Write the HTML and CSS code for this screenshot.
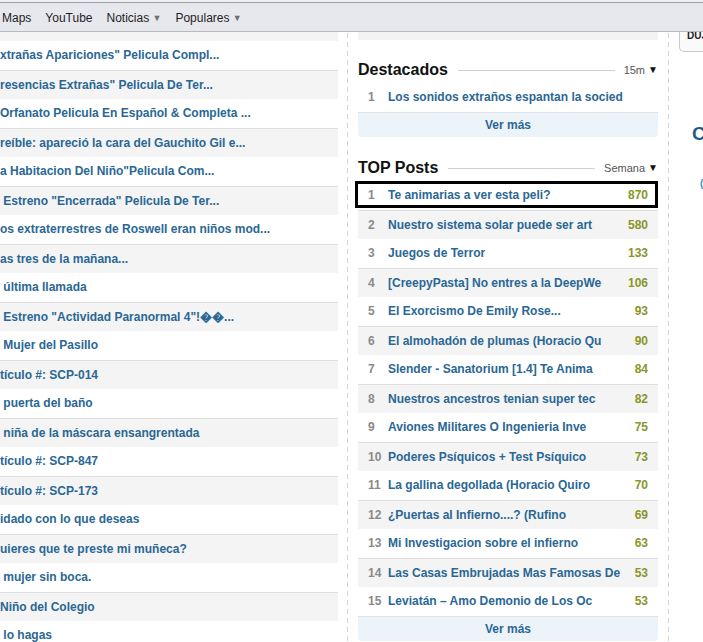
FILE: index.html
```html
<!DOCTYPE html>
<html lang="es">
<head>
<meta charset="utf-8">
<title>Posts</title>
<link rel="stylesheet" href="styles.css">
</head>
<body>
<div class="toolbar">
  <nav class="bookmarks">
    <span class="bm">Maps</span>
    <span class="bm">YouTube</span>
    <span class="bm">Noticias <span class="caret">&#9660;</span></span>
    <span class="bm">Populares <span class="caret">&#9660;</span></span>
  </nav>
</div>

<div class="page">
  <section class="col-left">
    <ul class="last-posts">
      <li class="stub"></li>
      <li><a>xtrañas Apariciones" Pelicula Compl...</a></li>
      <li><a>resencias Extrañas" Pelicula De Ter...</a></li>
      <li><a>Orfanato Pelicula En Español &amp; Completa ...</a></li>
      <li><a>reíble: apareció la cara del Gauchito Gil e...</a></li>
      <li><a>a Habitacion Del Niño"Pelicula Com...</a></li>
      <li><a>&nbsp;Estreno "Encerrada" Pelicula De Ter...</a></li>
      <li><a>os extraterrestres de Roswell eran niños mod...</a></li>
      <li><a>as tres de la mañana...</a></li>
      <li><a>&nbsp;última llamada</a></li>
      <li><a>&nbsp;Estreno "Actividad Paranormal 4"!&#xFFFD;&#xFFFD;...</a></li>
      <li><a>&nbsp;Mujer del Pasillo</a></li>
      <li><a>tículo #: SCP-014</a></li>
      <li><a>&nbsp;puerta del baño</a></li>
      <li><a>&nbsp;niña de la máscara ensangrentada</a></li>
      <li><a>tículo #: SCP-847</a></li>
      <li><a>tículo #: SCP-173</a></li>
      <li><a>idado con lo que deseas</a></li>
      <li><a>uieres que te preste mi muñeca?</a></li>
      <li><a>&nbsp;mujer sin boca.</a></li>
      <li><a>Niño del Colegio</a></li>
      <li><a>&nbsp;lo hagas</a></li>
    </ul>
  </section>

  <section class="col-mid">
    <div class="band"></div>

    <div class="box-head">
      <h2>Destacados</h2>
      <span class="rule"></span>
      <span class="period">15m <span class="caret">&#9660;</span></span>
    </div>
    <ol class="ranking">
      <li><span class="num">1</span><a class="title">Los sonidos extraños espantan la socied</a></li>
    </ol>
    <a class="more">Ver más</a>

    <div class="box-head second">
      <h2>TOP Posts</h2>
      <span class="rule"></span>
      <span class="period">Semana <span class="caret">&#9660;</span></span>
    </div>
    <ol class="ranking">
      <li class="marked"><span class="num">1</span><a class="title">Te animarias a ver esta peli?</a><span class="pts">870</span></li>
      <li><span class="num">2</span><a class="title">Nuestro sistema solar puede ser art</a><span class="pts">580</span></li>
      <li><span class="num">3</span><a class="title">Juegos de Terror</a><span class="pts">133</span></li>
      <li><span class="num">4</span><a class="title">[CreepyPasta] No entres a la DeepWe</a><span class="pts">106</span></li>
      <li><span class="num">5</span><a class="title">El Exorcismo De Emily Rose...</a><span class="pts">93</span></li>
      <li><span class="num">6</span><a class="title">El almohadón de plumas (Horacio Qu</a><span class="pts">90</span></li>
      <li><span class="num">7</span><a class="title">Slender - Sanatorium [1.4] Te Anima</a><span class="pts">84</span></li>
      <li><span class="num">8</span><a class="title">Nuestros ancestros tenian super tec</a><span class="pts">82</span></li>
      <li><span class="num">9</span><a class="title">Aviones Militares O Ingenieria Inve</a><span class="pts">75</span></li>
      <li><span class="num">10</span><a class="title">Poderes Psíquicos + Test Psíquico</a><span class="pts">73</span></li>
      <li><span class="num">11</span><a class="title">La gallina degollada (Horacio Quiro</a><span class="pts">70</span></li>
      <li><span class="num">12</span><a class="title">¿Puertas al Infierno....? (Rufino</a><span class="pts">69</span></li>
      <li><span class="num">13</span><a class="title">Mi Investigacion sobre el infierno</a><span class="pts">63</span></li>
      <li><span class="num">14</span><a class="title">Las Casas Embrujadas Mas Famosas De</a><span class="pts">53</span></li>
      <li><span class="num">15</span><a class="title">Leviatán – Amo Demonio de Los Oc</a><span class="pts">53</span></li>
    </ol>
    <a class="more">Ver más</a>
  </section>

  <aside class="col-right">
    <div class="tab">DUJ</div>
    <h3 class="side-title">C</h3>
    <a class="side-link">(</a>
  </aside>
</div>
</body>
</html>
```

FILE: styles.css
```css
html, body {
  margin: 0;
  padding: 0;
  overflow: hidden;
}

body {
  width: 703px;
  height: 642px;
  background: #fff;
  font-family: "Liberation Sans", Arial, sans-serif;
  color: #222;
}

a {
  color: #2a6795;
  text-decoration: none;
}

/* bookmarks bar */
.toolbar {
  padding-top: 2px;
  background: #eeeff2;
}

.bookmarks {
  height: 27px;
  padding: 1px 0 0 2px;
  border-top: 1px solid #9d9fa4;
  border-bottom: 1px solid #b7b9be;
  background: #e7e8ed;
  display: flex;
  align-items: center;
  gap: 14px;
  font-size: 12px;
  color: #1e1e1e;
}

.bookmarks .caret {
  font-size: 9px;
  color: #6f6f6f;
  vertical-align: 1px;
}

/* three-column page */
.page {
  display: flex;
  height: 610px;
  overflow: hidden;
}

.col-left {
  width: 338px;
  flex: none;
  overflow: hidden;
}

.last-posts {
  list-style: none;
  margin: 0;
  padding: 0;
}

.last-posts li {
  height: 29px;
  line-height: 29px;
  box-sizing: border-box;
  white-space: nowrap;
  overflow: hidden;
  font-size: 12px;
  font-weight: bold;
}

.last-posts li:nth-child(odd) {
  background: #f4f4f4;
  border-top: 1px solid #dedede;
  line-height: 28px;
}

.last-posts li.stub {
  height: 9px;
  border-top: 0;
}

.col-mid {
  width: 322px;
  flex: none;
  margin-left: 9px;
  padding: 0 11px;
  box-sizing: border-box;
  background:
    linear-gradient(#d3d3d3 5px, transparent 5px) 0 1px / 1px 9px repeat-y,
    linear-gradient(#d3d3d3 5px, transparent 5px) 100% 1px / 1px 9px repeat-y;
}

.band {
  height: 8px;
  background: #f3f3f3;
}

.box-head {
  display: flex;
  align-items: center;
  height: 26px;
  margin-top: 17px;
}

.box-head.second {
  margin-top: 18px;
}

.box-head h2 {
  margin: 0;
  font-size: 16px;
  font-weight: bold;
  color: #111;
}

.rule {
  flex: 1;
  height: 1px;
  background: #d0d0d0;
  margin: 0 9px 0 10px;
}

.period {
  font-size: 11px;
  color: #555;
}

.period .caret {
  font-size: 10px;
  color: #111;
  vertical-align: 1px;
}

.ranking {
  list-style: none;
  margin: 0;
  padding: 0;
}

.ranking li {
  display: flex;
  height: 29px;
  line-height: 29px;
  box-sizing: border-box;
  padding: 0 10px;
  font-size: 12px;
  font-weight: bold;
  white-space: nowrap;
}

.ranking li:nth-child(even) {
  background: #f4f4f4;
  border-top: 1px solid #dedede;
  line-height: 28px;
}

.num {
  width: 20px;
  flex: none;
  color: #8a8a8a;
}

.title {
  flex: 1;
  overflow: hidden;
}

.pts {
  color: #88962a;
  text-align: right;
}

.ranking li.marked {
  position: relative;
}

.ranking li.marked::after {
  content: "";
  position: absolute;
  left: -3px;
  right: 0;
  top: 0;
  height: 27px;
  border: 3px solid #000;
  box-sizing: border-box;
}

.more {
  display: block;
  height: 25px;
  box-sizing: border-box;
  border-top: 1px solid #dde3e8;
  border-radius: 0 0 3px 3px;
  background: #edf4f9;
  text-align: center;
  line-height: 24px;
  font-size: 12px;
  font-weight: bold;
}

/* right sidebar */
.col-right {
  width: 24px;
  flex: none;
  padding-left: 10px;
  white-space: nowrap;
}

.tab {
  margin-top: -8px;
  height: 28px;
  box-sizing: border-box;
  padding: 3px 0 0 7px;
  border: 1px solid #c9c9c9;
  border-right: 0;
  border-radius: 0 0 0 5px;
  background: #fafafa;
  font-size: 10px;
  font-weight: bold;
  line-height: 15px;
  color: #1a1a1a;
}

.side-title {
  margin: 71px 0 0;
  padding-left: 13px;
  font-size: 19px;
  line-height: 22px;
  font-weight: bold;
  color: #1d5b8b;
}

.side-link {
  display: block;
  margin-top: 32px;
  padding-left: 21px;
  font-size: 10px;
  line-height: 14px;
  font-weight: bold;
  color: #4a90c4;
}
```
